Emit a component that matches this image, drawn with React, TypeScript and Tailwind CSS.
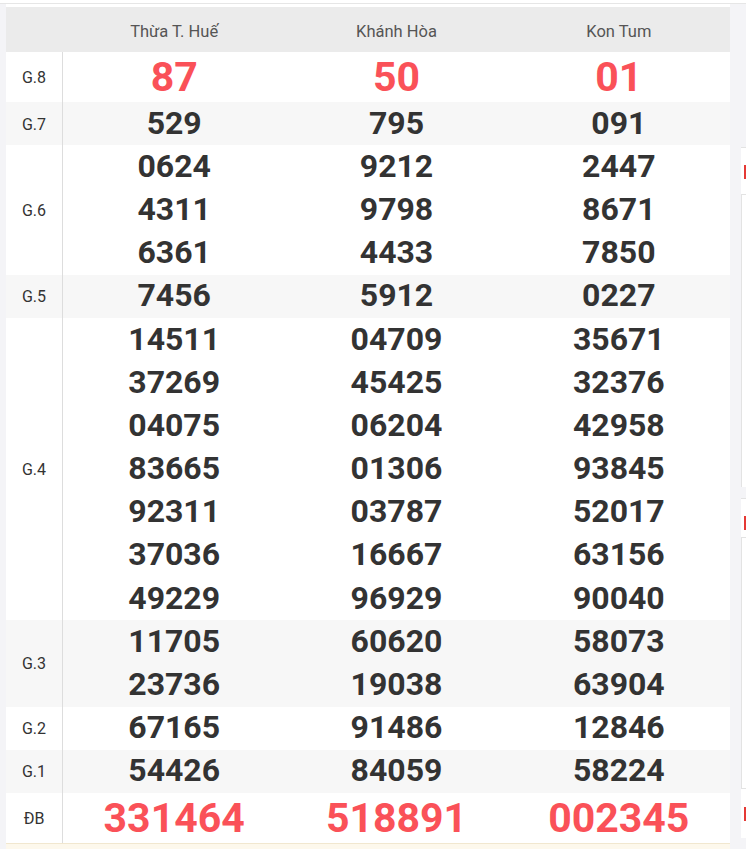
import React from 'react';

type Prize = { label: string; nums: string[][]; big?: boolean; alt?: boolean };

const PROVINCES = ['Thừa T. Huế', 'Khánh Hòa', 'Kon Tum'];

const PRIZES: Prize[] = [
  { label: 'G.8', nums: [['87'], ['50'], ['01']], big: true },
  { label: 'G.7', nums: [['529'], ['795'], ['091']], alt: true },
  {
    label: 'G.6',
    nums: [
      ['0624', '4311', '6361'],
      ['9212', '9798', '4433'],
      ['2447', '8671', '7850'],
    ],
  },
  { label: 'G.5', nums: [['7456'], ['5912'], ['0227']], alt: true },
  {
    label: 'G.4',
    nums: [
      ['14511', '37269', '04075', '83665', '92311', '37036', '49229'],
      ['04709', '45425', '06204', '01306', '03787', '16667', '96929'],
      ['35671', '32376', '42958', '93845', '52017', '63156', '90040'],
    ],
  },
  {
    label: 'G.3',
    nums: [
      ['11705', '23736'],
      ['60620', '19038'],
      ['58073', '63904'],
    ],
    alt: true,
  },
  { label: 'G.2', nums: [['67165'], ['91486'], ['12846']] },
  { label: 'G.1', nums: [['54426'], ['84059'], ['58224']], alt: true },
  { label: 'ĐB', nums: [['331464'], ['518891'], ['002345']], big: true },
];

function PrizeRow({ prize }: { prize: Prize }) {
  return (
    <div className={`flex ${prize.alt ? 'bg-[#f7f7f7]' : 'bg-white'}`}>
      <div className="w-[57px] shrink-0 border-r border-[#dddddd] flex items-center justify-center pt-[2px] text-[16px] text-[#333333]">
        {prize.label}
      </div>
      <div className="flex-1 grid grid-cols-3">
        {prize.nums.map((col, i) => (
          <div key={i} className="flex flex-col items-center">
            {col.map((n) =>
              prize.big ? (
                <div key={n} className="h-[50px] flex items-center text-[41px] font-bold text-[#fa5158] leading-none">
                  {n}
                </div>
              ) : (
                <div key={n} className="h-[43.2px] flex items-center pb-[2px] text-[32px] font-bold text-[#333333] leading-none">
                  {n}
                </div>
              )
            )}
          </div>
        ))}
      </div>
    </div>
  );
}

export default function App() {
  return (
    <div className="w-[746px] h-[849px] overflow-hidden bg-[#f4f4f7] font-['Roboto',sans-serif]">
      {/* dải trên */}
      <div className="h-[4px] bg-white border-b border-[#e6e6e6]" />

      <div className="flex">
        <div className="w-[6px] shrink-0" />

        {/* bảng kết quả */}
        <div className="w-[724px] shrink-0 bg-white pt-[3px]">
          <div className="flex h-[45px] bg-[#ebebeb]">
            <div className="w-[57px] shrink-0" />
            <div className="flex-1 grid grid-cols-3">
              {PROVINCES.map((p) => (
                <div key={p} className="flex items-center justify-center pt-[5px] text-[16.5px] text-[#555555]">
                  {p}
                </div>
              ))}
            </div>
          </div>
          {PRIZES.map((p) => (
            <PrizeRow key={p.label} prize={p} />
          ))}
          <div className="h-[8px] bg-[#fdf8ec] border-t border-[#f1e7cf]" />
        </div>

        <div className="w-[11px] shrink-0" />

        {/* cột bên phải (bị cắt) */}
        <div className="w-[5px] shrink-0 flex flex-col">
          <div className="h-[143px] bg-[#f4f4f7]" />
          <div className="h-[48px] bg-white border-y border-[#e3e3e3] pt-[17px] pl-[3px]">
            <div className="h-[14px] w-[2px] bg-[#e53935]" />
          </div>
          <div className="h-[292px] bg-white border-l border-[#e3e3e3]" />
          <div className="h-[11px] bg-[#f4f4f7]" />
          <div className="h-[40px] bg-white border-y border-[#e3e3e3] pt-[17px] pl-[3px]">
            <div className="h-[14px] w-[2px] bg-[#e53935]" />
          </div>
          <div className="h-[250px] bg-white border-l border-[#e3e3e3]" />
          <div className="h-[50px] bg-white border-t border-[#e3e3e3] pt-[18px] pl-[3px]">
            <div className="h-[14px] w-[2px] bg-[#e53935]" />
          </div>
        </div>
      </div>
    </div>
  );
}
